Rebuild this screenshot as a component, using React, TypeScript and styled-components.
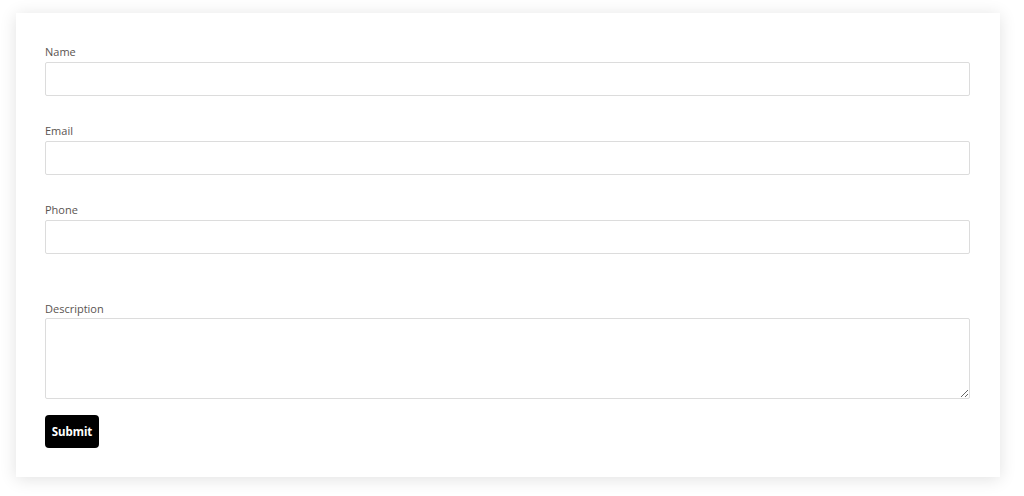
import React from "react"
import styled, { createGlobalStyle } from "styled-components"

const GlobalStyle = createGlobalStyle`
  html, body {
    margin: 0;
    padding: 0;
    background: #ffffff;
  }
  body {
    font-family: "Open Sans", "Noto Sans", sans-serif;
  }
`

const Page = styled.div`
  padding: 13px 24px 18px 16px;
`

const Card = styled.form`
  background: #ffffff;
  box-shadow: 0 2px 16px rgba(0, 0, 0, 0.12);
  padding: 31px 30px 29px 29px;
  display: flex;
  flex-direction: column;
`

const Field = styled.div<{ $gap?: number }>`
  display: flex;
  flex-direction: column;
  margin-bottom: ${(p) => p.$gap ?? 27.5}px;
`

const Label = styled.label`
  font-size: 11px;
  line-height: 15px;
  color: #5a5450;
  margin-bottom: 2.5px;
`

const Input = styled.input`
  box-sizing: border-box;
  height: 34px;
  width: 100%;
  border: 1px solid #dcdcdc;
  border-radius: 2px;
  background: #fff;
  font: inherit;
  padding: 0 8px;
  outline: none;
`

const TextArea = styled.textarea`
  box-sizing: border-box;
  height: 81px;
  width: 100%;
  border: 1px solid #dcdcdc;
  border-radius: 2px;
  background: #fff;
  font: inherit;
  padding: 6px 8px;
  outline: none;
  display: block;
`

const SubmitButton = styled.button`
  align-self: flex-start;
  width: 54px;
  height: 33px;
  background: #000;
  color: #fff;
  border: none;
  border-radius: 4px;
  font-family: "Noto Sans", "Open Sans", sans-serif;
  font-weight: 700;
  font-size: 11.5px;
  padding: 0;
  cursor: pointer;
`

const App = () => {
  return (
    <>
      <GlobalStyle />
      <Page>
        <Card onSubmit={(e) => e.preventDefault()}>
          <Field>
            <Label>Name</Label>
            <Input type="text" />
          </Field>
          <Field>
            <Label>Email</Label>
            <Input type="email" />
          </Field>
          <Field $gap={47}>
            <Label>Phone</Label>
            <Input type="tel" />
          </Field>
          <Field $gap={16}>
            <Label>Description</Label>
            <TextArea />
          </Field>
          <SubmitButton type="submit">Submit</SubmitButton>
        </Card>
      </Page>
    </>
  )
}

export default App
